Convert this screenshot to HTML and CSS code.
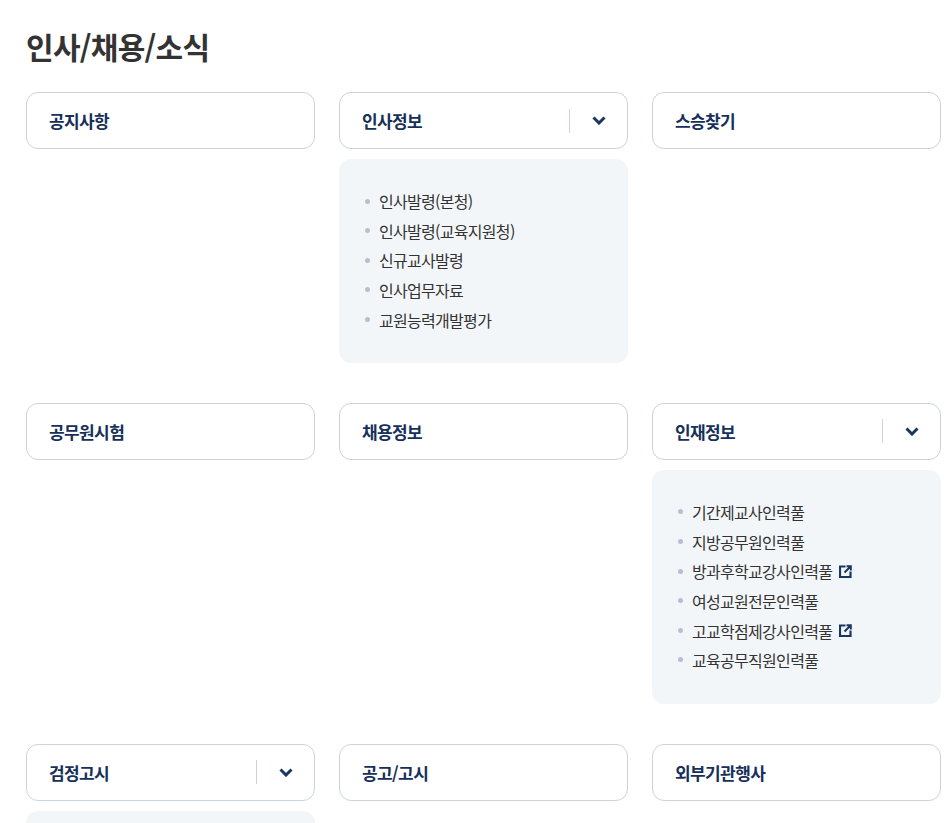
FILE: index.html
```html
<!DOCTYPE html>
<html lang="ko">
<head>
<meta charset="utf-8">
<title>인사/채용/소식</title>
<link rel="stylesheet" href="styles.css">
</head>
<body>
<main class="page">
  <h1 class="title">인사/채용/소식</h1>
  <div class="grid">
    <section class="item"><a class="head"><span class="label">공지사항</span></a></section>
    <section class="item">
      <a class="head"><span class="label">인사정보</span><span class="toggle"><svg class="chev" viewBox="0 0 14 9"><path d="M1.5 1.5 7 7l5.5-5.5"/></svg></span></a>
      <ul class="panel">
        <li>인사발령(본청)</li>
        <li>인사발령(교육지원청)</li>
        <li>신규교사발령</li>
        <li>인사업무자료</li>
        <li>교원능력개발평가</li>
      </ul>
    </section>
    <section class="item"><a class="head"><span class="label">스승찾기</span></a></section>

    <section class="item"><a class="head"><span class="label">공무원시험</span></a></section>
    <section class="item"><a class="head"><span class="label">채용정보</span></a></section>
    <section class="item">
      <a class="head"><span class="label">인재정보</span><span class="toggle"><svg class="chev" viewBox="0 0 14 9"><path d="M1.5 1.5 7 7l5.5-5.5"/></svg></span></a>
      <ul class="panel">
        <li>기간제교사인력풀</li>
        <li>지방공무원인력풀</li>
        <li>방과후학교강사인력풀<svg class="ext" viewBox="0 0 13 13"><path class="ext-box" d="M6.5 1.5H1v10.5h10.5V6.5"/><path class="ext-arrow" d="M5.5 7.5 11 2M7.5 1.2h4.3v4.3"/></svg></li>
        <li>여성교원전문인력풀</li>
        <li>고교학점제강사인력풀<svg class="ext" viewBox="0 0 13 13"><path class="ext-box" d="M6.5 1.5H1v10.5h10.5V6.5"/><path class="ext-arrow" d="M5.5 7.5 11 2M7.5 1.2h4.3v4.3"/></svg></li>
        <li>교육공무직원인력풀</li>
      </ul>
    </section>

    <section class="item">
      <a class="head"><span class="label">검정고시</span><span class="toggle"><svg class="chev" viewBox="0 0 14 9"><path d="M1.5 1.5 7 7l5.5-5.5"/></svg></span></a>
      <div class="panel panel-cut"></div>
    </section>
    <section class="item"><a class="head"><span class="label">공고/고시</span></a></section>
    <section class="item"><a class="head"><span class="label">외부기관행사</span></a></section>
  </div>
</main>
</body>
</html>
```
FILE: styles.css
```css
* { box-sizing: border-box; }
html, body { margin: 0; padding: 0; background: #fff; }
body {
  height: 823px;
  overflow: hidden;
  font-family: "Noto Sans CJK KR", "Noto Sans", sans-serif;
  color: #333;
}
.page { padding: 24px 10px 0 26px; }
.title {
  margin: 0 0 24px;
  height: 44px;
  font-size: 30px;
  line-height: 44px;
  font-weight: 700;
  letter-spacing: -0.7px;
  color: #333;
}
.grid {
  display: grid;
  grid-template-columns: repeat(3, 289px);
  column-gap: 24px;
  row-gap: 40px;
  align-items: start;
}
.head {
  display: flex;
  align-items: center;
  height: 57px;
  padding-left: 22px;
  background: #fff;
  border: 1px solid #ccd3de;
  border-radius: 12px;
}
.label {
  flex: 1;
  font-size: 17px;
  font-weight: 700;
  letter-spacing: -0.6px;
  color: #16305a;
}
.toggle {
  display: flex;
  align-items: center;
  justify-content: center;
  width: 58px;
  height: 24px;
  border-left: 1px solid #ccd3de;
}
.chev { width: 14px; height: 9px; }
.chev path { fill: none; stroke: #1a3663; stroke-width: 3; }
.panel {
  list-style: none;
  margin: 10px 0 0;
  padding: 27.5px 24px 28.5px;
  background: #f3f6f9;
  border-radius: 12px;
}
.panel-cut { height: 12px; padding: 0; border-radius: 12px 12px 0 0; }
.panel li {
  position: relative;
  display: flex;
  align-items: center;
  height: 29.6px;
  padding-left: 16px;
  font-size: 16px;
  letter-spacing: -0.7px;
  color: #333;
}
.panel li::before {
  content: "";
  position: absolute;
  left: 1.5px;
  top: 12px;
  width: 5px;
  height: 5px;
  border-radius: 50%;
  background: #b4c0d0;
}
.ext { width: 13px; height: 13px; margin-left: 7px; }
.ext-box { fill: none; stroke: #1a3663; stroke-width: 2.2; }
.ext-arrow { fill: none; stroke: #1a3663; stroke-width: 2; }
```
